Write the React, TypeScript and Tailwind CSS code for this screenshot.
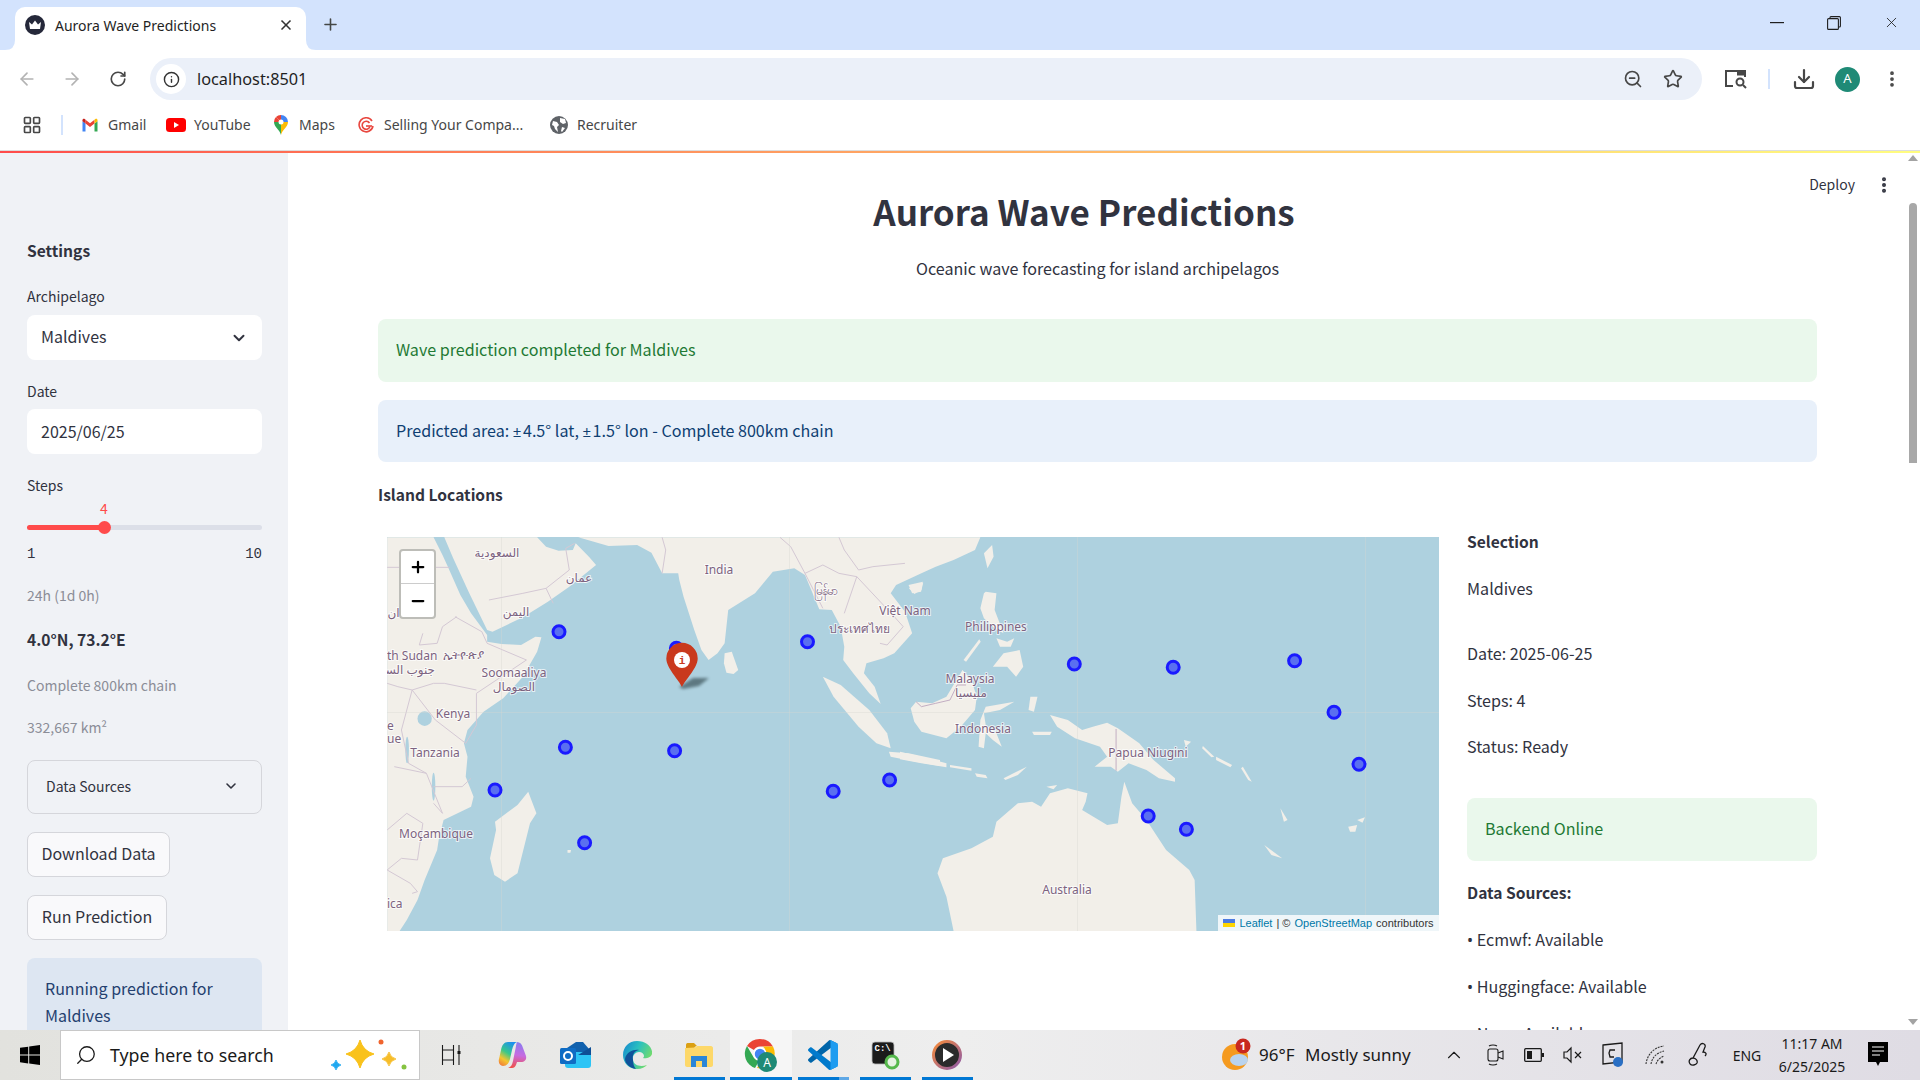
import type { ReactNode } from "react";
import {
  ArrowLeft,
  ArrowRight,
  ChevronDown,
  ChevronUp,
  Download,
  EllipsisVertical,
  Info,
  LayoutGrid,
  Minus,
  Plus,
  RotateCw,
  Search,
  Star,
  X,
  ZoomOut,
} from "lucide-react";

const Z5 = "translate(-7 -7) scale(0.35714 0.33333)";
const Z6 = "translate(513 -7) scale(0.35714 0.33333)";

const landLeft = [
  "20,22 150,22 175,75 190,110 225,195 255,250 300,315 300,335 340,342 395,345 435,320 452,322 440,365 400,440 345,505 290,545 245,600 235,640 245,680 240,740 262,800 255,830 178,870 165,925 160,960 125,1050 105,1110 75,1170 55,1203 20,1203",
  "180,22 205,85 250,190 300,300 315,305 400,262 470,215 530,170 605,105 585,80 548,40 540,60 500,62 465,50 440,22",
  "555,22 640,48 720,45 760,68 790,130 835,130 838,150 850,200 880,300 900,360 920,390 945,370 965,340 975,240 1050,190 1100,125 1160,115 1190,135 1230,238 1265,240 1290,290 1300,350 1297,390 1325,430 1370,490 1402,522 1385,470 1355,430 1362,400 1410,385 1440,370 1490,310 1470,245 1430,190 1445,165 1516,130 1556,110 1606,90 1666,60 1681,22",
  "965,370 985,365 1003,420 990,432 970,428 963,400",
  "415,785 438,850 420,880 385,1030 350,1055 320,1035 308,985 325,900 322,875 385,825",
  "1240,440 1290,465 1370,540 1420,610 1430,655 1390,640 1340,590 1270,500",
  "1425,665 1480,670 1568,690 1568,708 1500,695 1430,680",
  "525,960 535,960 533,968 525,968",
  "1480,165 1520,155 1515,185 1490,190",
];

const landRight = [
  "0,665 60,680 130,700 130,712 60,700 0,688",
  "30,535 45,515 90,520 130,500 175,420 200,450 215,500 210,540 170,590 130,625 60,605 40,575",
  "225,570 240,530 320,515 280,540 235,550 240,585 270,610 285,650 260,630 240,610 235,655 220,650",
  "235,190 240,185 270,190 265,240 290,310 265,295 235,265 225,235",
  "260,410 290,370 335,360 345,410 325,440 300,410",
  "270,325 300,335 320,325 310,350 280,350",
  "178,390 222,328 226,335 185,395",
  "235,70 258,45 262,80 245,115",
  "25,175 65,158 60,180 40,192",
  "420,555 470,570 510,600 540,590 580,578 610,595 670,640 710,690 770,745 770,755 725,745 690,720 640,700 610,725 590,710 545,710 580,680 560,650 490,625 440,590",
  "290,745 355,710 330,735 295,750",
  "210,730 240,735 245,745 215,740",
  "140,705 200,715 200,722 140,712",
  "150,1203 130,1100 105,1030 120,985 200,955 260,920 270,875 330,820 370,815 395,830 420,790 470,775 525,790 520,815 510,840 580,885 610,880 620,800 628,755 650,820 690,870 745,960 810,1020 825,1050 830,1203",
  "1020,945 1070,985 1040,975",
  "1255,890 1280,885 1275,905 1260,905",
  "1280,870 1302,862 1295,878",
  "848,648 880,680 872,682 846,655",
  "885,680 930,705 925,712 885,690",
  "960,710 985,755 975,750 955,715",
  "365,500 385,500 375,545 360,540",
  "370,605 425,605 420,615 375,615",
  "410,770 440,765 430,778",
  "795,630 815,635 800,650",
  "1065,835 1085,870 1075,875",
];

const bordersLeft = [
  "20,112 195,112",
  "305,210 400,190 465,175 485,220",
  "465,175 530,120 520,55 545,40",
  "210,260 285,305 300,340 410,390 340,440 270,490 270,585 240,640 155,570 90,480",
  "20,460 50,470 90,480 150,460 180,460 270,480",
  "120,310 110,345 160,340 175,290 215,260",
  "150,770 230,770 255,745",
  "90,480 60,600 80,700 130,730 175,850 150,820",
  "40,710 130,730",
  "20,900 75,850 120,880 105,990 60,985 20,1020 85,1060 105,1085 90,1090",
  "790,130 800,60 790,22",
  "1120,22 1150,50 1190,130 1240,235",
  "1285,22 1300,60 1340,120 1380,110 1470,100",
  "1300,250 1335,140 1440,260 1465,290 1420,345 1400,340",
  "1190,130 1240,105 1285,130 1335,140",
];

const bordersRight = ["45,515 60,530 100,520 140,510 160,465 185,465", "605,597 605,722"];

const dots = [
  [172, 94.7],
  [289.4, 111.3],
  [420.5, 104.7],
  [178.4, 210.3],
  [287.6, 213.7],
  [108, 253],
  [197.6, 305.7],
  [446.2, 254.3],
  [502.6, 243],
  [687.3, 127],
  [786.2, 130.3],
  [907.6, 123.7],
  [947, 175.3],
  [972, 227.3],
  [761.2, 279],
  [799.4, 292.3],
];

const labels: [string, number, number, "middle" | "start" | "end"][] = [
  ["السعودية", 110, 20, "middle"],
  ["عمان", 192, 45, "middle"],
  ["India", 332, 37, "middle"],
  ["မြန်မာ", 438, 58, "middle"],
  ["Việt Nam", 518, 78, "middle"],
  ["ประเทศไทย", 472, 96, "middle"],
  ["اليمن", 129, 79, "middle"],
  ["th Sudan", 0, 123, "start"],
  ["ኢትዮጵያ", 76, 122, "middle"],
  ["جنوب السو", 48, 137, "end"],
  ["Soomaaliya", 127, 140, "middle"],
  ["الصومال", 127, 154, "middle"],
  ["Kenya", 66, 181, "middle"],
  ["Tanzania", 48, 220, "middle"],
  ["e", 0, 193, "start"],
  ["ue", 0, 206, "start"],
  ["Moçambique", 49, 301, "middle"],
  ["ica", 0, 371, "start"],
  ["دان", 18, 80, "end"],
  ["Philippines", 609, 94, "middle"],
  ["Malaysia", 583, 146, "middle"],
  ["مليسيا", 584, 160, "middle"],
  ["Indonesia", 596, 196, "middle"],
  ["Papua Niugini", 761, 220, "middle"],
  ["Australia", 680, 357, "middle"],
];

function WorldMap() {
  return (
    <div className="relative h-[394px] w-[1052px] overflow-hidden bg-[#aed1df]">
      <svg viewBox="0 0 1052 394" className="block h-full w-full">
        <g transform={Z5} className="blur-[0.4px]">
          {landLeft.map((p) => (
            <polygon key={p} points={p} fill="#f2efe9" />
          ))}
          <ellipse cx="125" cy="566" rx="20" ry="22" fill="#aed1df" />
          <ellipse cx="76" cy="660" rx="5" ry="40" fill="#aed1df" />
          <ellipse cx="150" cy="770" rx="5" ry="42" fill="#aed1df" />
          {bordersLeft.map((p) => (
            <polyline key={p} points={p} fill="none" stroke="#d4c8d4" strokeWidth="1" vectorEffect="non-scaling-stroke" />
          ))}
        </g>
        <g transform={Z6} className="blur-[0.4px]">
          {landRight.map((p) => (
            <polygon key={p} points={p} fill="#f2efe9" />
          ))}
          {bordersRight.map((p) => (
            <polyline key={p} points={p} fill="none" stroke="#c3aec3" strokeWidth="1" vectorEffect="non-scaling-stroke" />
          ))}
        </g>
        <g stroke="#d8d8d0" strokeOpacity="0.35" strokeWidth="1">
          <line x1="114.500" y1="0" x2="114.500" y2="394" />
          <line x1="402.500" y1="0" x2="402.500" y2="394" />
          <line x1="690.500" y1="0" x2="690.500" y2="394" />
          <line x1="978.500" y1="0" x2="978.500" y2="394" />
          <line x1="0" y1="175.500" x2="1052" y2="175.500" />
        </g>
        <g className="font-['Noto_Sans','DejaVu_Sans',sans-serif] text-[12px] [paint-order:stroke]" fill="#7d6380" stroke="#ffffff" strokeWidth="2" strokeOpacity="0.7">
          {labels.map(([text, x, y, anchor]) => (
            <text key={text} x={x} y={y} textAnchor={anchor}>
              {text}
            </text>
          ))}
        </g>
        {dots.map(([x, y]) => (
          <circle key={x} cx={x} cy={y} r="6" fill="#5a6ff0" stroke="#1a1aff" strokeWidth="3" />
        ))}
        <polygon points="292,150 306,141 322,141 312,149 296,152" fill="#334a50" opacity="0.65" className="blur-[1.5px]" />
        <path d="M295 150c-3-7-15.700-19-15.700-28.500a15.700 15.700 0 0 1 31.400 0c0 9.500-12.700 21.500-15.700 28.500z" fill="#c9391d" />
        <circle cx="295" cy="123" r="8" fill="#ffffff" />
        <text x="295" y="127" textAnchor="middle" className="font-['Liberation_Mono',monospace] text-[11px] font-bold" fill="#c9391d">
          i
        </text>
      </svg>
      <div className="absolute left-[12px] top-[12px] w-[37px] overflow-hidden rounded-[4px] border-2 border-[#bdbdb8] bg-white font-['Liberation_Sans',sans-serif] text-black">
        <div className="flex h-[33px] items-center justify-center border-b border-[#cccccc]">
          <Plus size={18} strokeWidth={3} />
        </div>
        <div className="flex h-[33px] items-center justify-center">
          <Minus size={18} strokeWidth={3} />
        </div>
      </div>
      <div className="absolute bottom-0 right-0 flex h-[16px] w-[221px] items-center justify-center gap-[4px] bg-white/80 font-['Liberation_Sans',sans-serif] text-[11px] text-[#333333]">
        <span className="flex h-[8px] w-[12px] flex-col">
          <span className="h-1/2 bg-[#4c7be1]" />
          <span className="h-1/2 bg-[#ffd500]" />
        </span>
        <span className="text-[#0078a8]">Leaflet</span>
        <span>| ©</span>
        <span className="text-[#0078a8]">OpenStreetMap</span>
        <span>contributors</span>
      </div>
    </div>
  );
}

function Crown() {
  return (
    <svg viewBox="0 0 20 20" className="h-[20px] w-[20px]">
      <circle cx="10" cy="10" r="10" fill="#25283a" />
      <path d="M4 7l3 2.500L10 5.500l3 4 3-2.500-1 7H5z" fill="#ffffff" />
    </svg>
  );
}

function GmailIcon() {
  return (
    <svg viewBox="0 0 24 24" className="h-[18px] w-[18px]">
      <path fill="#4285F4" d="M2 20.500h4V10L2 7z" />
      <path fill="#34A853" d="M18 20.500h4V7l-4 3z" />
      <path fill="#EA4335" d="M6 10V5l6 4.500L18 5v5l-6 4.500z" />
      <path fill="#FBBC04" d="M18 5l1.500-1.200C21 3 22 4 22 5.500V7l-4 3z" />
      <path fill="#C5221F" d="M2 7V5.500C2 4 3.500 3 5 4l1 1v5z" />
    </svg>
  );
}

function YouTubeIcon() {
  return (
    <svg viewBox="0 0 20 14" className="h-[14px] w-[20px]">
      <rect width="20" height="14" rx="3.500" fill="#ff0000" />
      <path d="M8 4l5 3-5 3z" fill="#ffffff" />
    </svg>
  );
}

function MapsIcon() {
  return (
    <svg viewBox="0 0 14 20" className="h-[20px] w-[14px]">
      <path d="M7 20C6 15 0 12 0 7h7z" fill="#34a853" />
      <path d="M7 20c1-5 7-8 7-13H7z" fill="#fbbc04" />
      <path d="M2 2a7 7 0 0 1 5-2v7z" fill="#ea4335" />
      <path d="M7 0a7 7 0 0 1 7 7H7z" fill="#4285f4" />
      <path d="M2 2L7 7H0a7 7 0 0 1 2-5z" fill="#ea4335" />
      <circle cx="7" cy="7" r="2.500" fill="#ffffff" />
    </svg>
  );
}

function SellingIcon() {
  return (
    <svg viewBox="0 0 16 16" className="h-[16px] w-[16px]" fill="none" stroke="#e8473f" strokeWidth="1.600">
      <path d="M14 4A7 7 0 1 0 15 9" />
      <path d="M11.500 6A4 4 0 1 0 12 9.500" />
      <path d="M8 9h6" />
    </svg>
  );
}

function RecruiterIcon() {
  return (
    <svg viewBox="0 0 18 18" className="h-[18px] w-[18px]">
      <circle cx="9" cy="9" r="9" fill="#5f6368" />
      <path d="M3 5l4 1 2 3-2 2 1 5-3-3-1-3-2-1zM10 2l5 1 1 4-3 1-3-2zM12 11l3 1-3 4-1-1z" fill="#ffffff" />
    </svg>
  );
}

function Bookmark({ icon, label, itemClass, iconClass }: { icon: ReactNode; label: string; itemClass: string; iconClass: string }) {
  return (
    <div className={`flex items-center ${itemClass}`}>
      <div className={`flex shrink-0 items-center ${iconClass}`}>{icon}</div>
      <span className="whitespace-nowrap text-[14px] text-[#474747]">{label}</span>
    </div>
  );
}

function BrowserChrome() {
  return (
    <div className="font-['Noto_Sans',sans-serif]">
      <div className="flex h-[50px] items-end bg-[#d3e3fd] pl-[15px]">
        <div className="relative flex h-[43px] w-[291px] items-center rounded-t-[10px] bg-white pb-[7px] pl-[10px] pr-[12px]">
          <svg viewBox="0 0 10 10" className="absolute bottom-0 left-[-10px] h-[10px] w-[10px]">
            <path d="M0 10Q10 10 10 0V10z" fill="#ffffff" />
          </svg>
          <svg viewBox="0 0 10 10" className="absolute bottom-0 right-[-10px] h-[10px] w-[10px]">
            <path d="M10 10Q0 10 0 0V10z" fill="#ffffff" />
          </svg>
          <Crown />
          <span className="ml-[10px] flex-1 whitespace-nowrap text-[14px] text-[#1f1f1f]">Aurora Wave Predictions</span>
          <X size={16} strokeWidth={2.5} className="text-[#333333]" />
        </div>
        <Plus size={19} strokeWidth={2} className="mb-[16px] ml-[15px] text-[#444746]" />
        <div className="mb-[19px] ml-auto flex items-center">
          <svg viewBox="0 0 14 2" className="h-[2px] w-[14px]">
            <rect width="14" height="1.200" fill="#1f1f1f" />
          </svg>
          <svg viewBox="0 0 14 14" className="ml-[43px] h-[14px] w-[14px]" fill="none" stroke="#1f1f1f" strokeWidth="1.100">
            <rect x="0.600" y="2.600" width="10.800" height="10.800" rx="1" />
            <path d="M3 2.500V1.600C3 1 3.500 .600 4 .600h8.400c.6 0 1 .4 1 1V10c0 .5-.4 1-1 1h-1" />
          </svg>
          <X size={17} strokeWidth={1.2} className="ml-[42px] mr-[20px] text-[#1f1f1f]" />
        </div>
      </div>
      <div className="flex h-[58px] items-start rounded-t-[10px] bg-white pt-[8px]">
        <div className="flex h-[42px] w-[150px] items-center pl-[17px] text-[#5f6368]">
          <ArrowLeft size={20} strokeWidth={2} className="text-[#b3b3b3]" />
          <ArrowRight size={20} strokeWidth={2} className="ml-[25px] text-[#b3b3b3]" />
          <RotateCw size={18} strokeWidth={2.2} className="ml-[27px] text-[#474747]" />
        </div>
        <div className="flex h-[42px] w-[1552px] items-center rounded-full bg-[#ebf0f9] pl-[6px] pr-[19px]">
          <div className="flex h-[30px] w-[30px] items-center justify-center rounded-full bg-white">
            <Info size={17} strokeWidth={2} className="text-[#333333]" />
          </div>
          <span className="ml-[11px] flex-1 text-[16.300px] text-[#1f1f1f]">localhost:8501</span>
          <ZoomOut size={20} strokeWidth={2} className="text-[#474747]" />
          <Star size={20} strokeWidth={2} className="ml-[20px] text-[#474747]" />
        </div>
        <div className="flex h-[42px] items-center">
          <svg viewBox="0 0 24 20" className="ml-[22px] h-[20px] w-[24px]" fill="none" stroke="#474747" strokeWidth="2">
            <path d="M9 17H2V2h19v6" />
            <path d="M13 1.500h8v5h-8z" fill="#474747" stroke="none" />
            <circle cx="16" cy="13" r="3.500" />
            <path d="M19 16l3 3" />
          </svg>
          <div className="ml-[20px] h-[20px] w-[2px] bg-[#d3e3fd]" />
          <Download size={24} strokeWidth={2.2} className="ml-[22px] text-[#474747]" />
          <div className="ml-[19px] flex h-[25px] w-[25px] items-center justify-center rounded-full bg-[#1f8a76] text-[13px] text-white">A</div>
          <EllipsisVertical size={20} strokeWidth={2.5} className="ml-[22px] text-[#474747]" />
        </div>
      </div>
      <div className="flex h-[42px] items-center pb-[9px] pl-[22px]">
        <LayoutGrid size={20} strokeWidth={2} className="text-[#474747]" />
        <div className="ml-[19px] mr-[18px] h-[20px] w-[2px] bg-[#d3e3fd]" />
        <Bookmark icon={<GmailIcon />} label="Gmail" itemClass="w-[85px]" iconClass="w-[27px]" />
        <Bookmark icon={<YouTubeIcon />} label="YouTube" itemClass="w-[108px]" iconClass="w-[28px]" />
        <Bookmark icon={<MapsIcon />} label="Maps" itemClass="w-[84px]" iconClass="w-[25px]" />
        <Bookmark icon={<SellingIcon />} label="Selling Your Compa..." itemClass="w-[192px]" iconClass="w-[26px]" />
        <Bookmark icon={<RecruiterIcon />} label="Recruiter" itemClass="w-[100px]" iconClass="w-[27px]" />
      </div>
      <div className="h-[1px] bg-[#dddddd]" />
      <div className="h-[2px] bg-gradient-to-r from-[#ff4b4b] to-[#fffd80]" />
    </div>
  );
}

function Sidebar() {
  return (
    <aside className="h-full w-[288px] shrink-0 overflow-hidden bg-[#f0f2f6] pl-[27px] pr-[26px] pt-[86px] text-[#31333f]">
      <div className="h-[26px] text-[15.600px] font-semibold leading-[22px]">Settings</div>
      <div className="mt-[22px] h-[20px] text-[14px] leading-[18px]">Archipelago</div>
      <div className="mt-[8px] flex h-[45px] items-center justify-between rounded-[8px] bg-white pb-[3px] pl-[14px] pr-[14px] text-[16px]">
        <span>Maldives</span>
        <ChevronDown size={18} strokeWidth={2.6} className="mt-[3px]" />
      </div>
      <div className="mt-[22px] h-[20px] text-[14px] leading-[18px]">Date</div>
      <div className="mt-[7px] flex h-[45px] items-center rounded-[8px] bg-white pb-[2px] pl-[14px] text-[16px]">2025/06/25</div>
      <div className="mt-[22px] h-[20px] text-[14px] leading-[18px]">Steps</div>
      <div className="ml-[70px] mt-[2px] h-[20px] w-[14px] text-center text-[14px] leading-[20px] text-[#ff4b4b]">4</div>
      <div className="relative mt-[7px] h-[5px] rounded-full bg-[#dcdfe8]">
        <div className="h-full w-[78px] rounded-full bg-[#ff4b4b]" />
        <div className="absolute left-[71px] top-[-4px] h-[13px] w-[13px] rounded-full bg-[#ff4b4b]" />
      </div>
      <div className="mt-[14px] flex h-[20px] justify-between font-['Liberation_Mono',monospace] text-[14px] leading-[20px]">
        <span>1</span>
        <span>10</span>
      </div>
      <div className="mt-[22px] h-[20px] text-[14px] leading-[18px] text-[#8b8d97]">24h (1d 0h)</div>
      <div className="mt-[22px] h-[24px] text-[15.600px] font-semibold leading-[22px]">4.0°N, 73.2°E</div>
      <div className="mt-[24px] h-[20px] text-[14px] leading-[18px] text-[#8b8d97]">Complete 800km chain</div>
      <div className="mt-[22px] h-[20px] text-[14px] leading-[19px] text-[#8b8d97]">332,667 km²</div>
      <div className="mt-[22px] flex h-[54px] items-center justify-between rounded-[8px] border border-[#d5d6db] pb-[2px] pl-[18px] pr-[22px] text-[14px]">
        <span>Data Sources</span>
        <ChevronDown size={16} strokeWidth={2.4} />
      </div>
      <div className="mt-[18px] flex h-[45px] w-[143px] items-center justify-center rounded-[8px] border border-[#d5d6db] bg-[#f9f9fb] pb-[3px] text-[16px]">Download Data</div>
      <div className="mt-[18px] flex h-[45px] w-[140px] items-center justify-center rounded-[8px] border border-[#d5d6db] bg-[#f9f9fb] pb-[3px] text-[16px]">Run Prediction</div>
      <div className="mt-[18px] h-[100px] rounded-[8px] bg-[#dde6f2] px-[18px] pt-[17px] text-[16px] leading-[27px] text-[#24406f]">Running prediction for Maldives</div>
    </aside>
  );
}

function Line({ children, className = "" }: { children: ReactNode; className?: string }) {
  return <div className={`h-[24px] leading-[22px] ${className}`}>{children}</div>;
}

function Bullet({ children }: { children: ReactNode }) {
  return (
    <Line className="mt-[23px] text-[16.100px]">
      <span className="font-['Noto_Sans',sans-serif]">•</span> {children}
    </Line>
  );
}

function MainContent() {
  return (
    <main className="relative flex h-full min-w-0 flex-1 overflow-hidden bg-white text-[#31333f]">
      <div className="absolute right-[65px] top-[21px] text-[14px] leading-[20px]">Deploy</div>
      <EllipsisVertical size={20} strokeWidth={2.8} className="absolute right-[26px] top-[22px]" />
      <div className="h-full w-[1617px] shrink-0 pl-[90px] pr-[88px] pt-[33px]">
        <h1 className="h-[52px] pr-[27px] text-center text-[35px] font-semibold leading-[50px]">Aurora Wave Predictions</h1>
        <Line className="mt-[19px] text-center text-[16.100px]">Oceanic wave forecasting for island archipelagos</Line>
        <div className="mt-[38px] flex h-[63px] items-center rounded-[8px] bg-[#eaf8ec] px-[18px] pb-[3px] text-[16.100px] text-[#1f7a35]">Wave prediction completed for Maldives</div>
        <div className="mt-[18px] flex h-[62px] items-center rounded-[8px] bg-[#e8f0fa] px-[18px] pb-[2px] text-[16.100px] text-[#0f3f72]">
          <span>
            Predicted area: <span className="mr-[1.500px] font-['Noto_Sans',sans-serif] text-[15px]">±</span>4.5° lat, <span className="mr-[1.500px] font-['Noto_Sans',sans-serif] text-[15px]">±</span>1.5° lon - Complete 800km chain
          </span>
        </div>
        <Line className="mt-[21px] text-[15.600px] font-semibold">Island Locations</Line>
        <div className="mt-[23px] flex">
          <div className="ml-[9px] pt-[7px]">
            <WorldMap />
          </div>
          <div className="ml-[28px] w-[350px]">
            <Line className="text-[15.600px] font-semibold">Selection</Line>
            <Line className="mt-[23px] text-[16.100px]">Maldives</Line>
            <Line className="mt-[41px] text-[16.100px]">Date: 2025-06-25</Line>
            <Line className="mt-[23px] text-[16.100px]">Steps: 4</Line>
            <Line className="mt-[22px] text-[16.100px]">Status: Ready</Line>
            <div className="mt-[39px] flex h-[63px] items-center rounded-[8px] bg-[#eaf8ec] px-[18px] pb-[3px] text-[16.100px] text-[#1f7a35]">Backend Online</div>
            <Line className="mt-[20px] text-[15.600px] font-semibold">Data Sources:</Line>
            <Bullet>Ecmwf: Available</Bullet>
            <Bullet>Huggingface: Available</Bullet>
            <Bullet>Noaa: Available</Bullet>
          </div>
        </div>
      </div>
      <div className="flex h-full w-[15px] shrink-0 flex-col items-center">
        <div className="mt-[2px] h-0 w-0 border-x-[5px] border-b-[6px] border-x-transparent border-b-[#a3a3a3]" />
        <div className="mt-[42px] h-[260px] w-[8px] rounded-t-full bg-[#a8a8a8]" />
        <div className="mt-auto mb-[5px] h-0 w-0 border-x-[5px] border-t-[6px] border-x-transparent border-t-[#a3a3a3]" />
      </div>
    </main>
  );
}

function TaskButton({ children, bar, active, split }: { children: ReactNode; bar?: boolean; active?: boolean; split?: boolean }) {
  return (
    <div className={`relative flex h-full w-[62px] items-center justify-center ${active ? "bg-[#f6f6f6]" : ""}`}>
      {children}
      {bar && (
        <div className={`absolute bottom-0 flex h-[3px] justify-end bg-[#0078d4] ${active ? "w-full" : "w-[51px]"}`}>
          {split && <div className="h-full w-[10px] bg-[#5fa8e6]" />}
        </div>
      )}
    </div>
  );
}

function Sparkles() {
  return (
    <svg viewBox="0 0 80 40" className="h-[40px] w-[80px]">
      <path d="M30 5Q33 16 44 19 33 22 30 33 27 22 16 19 27 16 30 5z" fill="#f9c21b" stroke="#f9c21b" strokeWidth="1" strokeLinejoin="round" />
      <path d="M59 17Q60.500 22.500 66 24 60.500 25.500 59 31 57.500 25.500 52 24 57.500 22.500 59 17z" fill="#f6bd2a" stroke="#f6bd2a" strokeWidth="0.800" strokeLinejoin="round" />
      <path d="M6 25Q7 29 11 30 7 31 6 35 5 31 1 30 5 29 6 25z" fill="#1fa8f0" stroke="#1fa8f0" strokeWidth="0.800" strokeLinejoin="round" />
      <circle cx="51" cy="7" r="2.500" fill="#f0642e" />
      <circle cx="74" cy="32" r="2.500" fill="#85c341" />
    </svg>
  );
}

function Taskbar() {
  return (
    <footer className="flex h-[50px] items-center bg-gradient-to-r from-[#e2e2de] via-[#eeeeee] to-[#dfdce4] font-['Noto_Sans',sans-serif] text-[#1a1a1a]">
      <div className="flex w-[60px] justify-center">
        <svg viewBox="0 0 20 20" className="h-[20px] w-[20px]" fill="#000000">
          <path d="M0 2.800l8.200-1.100v7.900H0zM9.200 1.500L20 0v9.600H9.200zM0 10.500h8.200v7.900L0 17.200zM9.200 10.500H20V20L9.200 18.500z" />
        </svg>
      </div>
      <div className="flex h-full w-[360px] items-center border border-[#c8c8c8] bg-white pl-[14px] pr-[9px]">
        <Search size={22} strokeWidth={1.4} className="-scale-x-100" />
        <span className="ml-[13px] whitespace-nowrap text-[17.800px]">Type here to search</span>
        <div className="ml-auto">
          <Sparkles />
        </div>
      </div>
      <TaskButton>
        <svg viewBox="0 0 20 20" className="h-[20px] w-[20px]" fill="none" stroke="#1a1a1a" strokeWidth="1.100">
          <path d="M1.500 0v20M12.500 0v20M1.500 5h11M1.500 15h11M18 0v20" />
          <rect x="16.500" y="6" width="3" height="3" fill="#1a1a1a" stroke="none" />
        </svg>
      </TaskButton>
      <TaskButton>
        <svg viewBox="0 0 30 30" className="h-[30px] w-[30px]">
          <defs>
            <linearGradient id="copL" x1="0.700" y1="0" x2="0.200" y2="1">
              <stop offset="0" stopColor="#1c8ff0" />
              <stop offset="0.450" stopColor="#38c88a" />
              <stop offset="0.750" stopColor="#f5c52e" />
              <stop offset="1" stopColor="#f0803a" />
            </linearGradient>
            <linearGradient id="copR" x1="0.500" y1="0" x2="0.400" y2="1">
              <stop offset="0" stopColor="#8a7cf0" />
              <stop offset="0.500" stopColor="#c76be0" />
              <stop offset="1" stopColor="#f0504a" />
            </linearGradient>
          </defs>
          <path d="M10 2h9c-3 1-4 4-5 8l-2 9c-1 4-3 7-7 7-3 0-5-3-4-7l2-9c1-5 3-8 7-8z" fill="url(#copL)" />
          <path d="M19 2c3 0 5 2 6 6l3 8c1 4-2 6-5 6h-4l-1 3c-1 2-2 3-4 3h-4c3-1 4-3 5-7l2-10c1-4 1-7 2-9z" fill="url(#copR)" />
        </svg>
      </TaskButton>
      <TaskButton>
        <svg viewBox="0 0 32 28" className="h-[28px] w-[32px]">
          <path d="M8 7l9-6h7l6 7-12 8z" fill="#1161ad" />
          <path d="M6 11h26v13c0 2-1 3-3 3H9c-2 0-3-1-3-3z" fill="#2cc4f5" />
          <path d="M19 14L32 6v8z" fill="#0e4f96" />
          <rect x="1" y="7" width="16" height="16" rx="1.500" fill="#0f6cc4" />
          <circle cx="9" cy="15" r="4" fill="none" stroke="#ffffff" strokeWidth="2" />
        </svg>
      </TaskButton>
      <TaskButton>
        <svg viewBox="0 0 30 30" className="h-[30px] w-[30px]">
          <defs>
            <linearGradient id="edgeA" x1="0" y1="0" x2="1" y2="0.500">
              <stop offset="0" stopColor="#1584d0" />
              <stop offset="0.500" stopColor="#2ac0c0" />
              <stop offset="1" stopColor="#74dc6a" />
            </linearGradient>
          </defs>
          <path d="M15 1C7 1 1 7 1 15c0 8 6 14 14 14 5 0 8-2 10-4-6 2-13 1-14-5-1-4 2-8 6-8 3 0 5 2 5 4 0 1-1 2-1 2 2 1 8 0 9-4C31 7 24 1 15 1z" fill="url(#edgeA)" />
          <path d="M11 20c-1-5 1-9 6-10-5-1-13 2-14 9 0 5 5 9 11 10-2-2-3-5-3-9z" fill="#10529a" />
        </svg>
      </TaskButton>
      <TaskButton bar>
        <svg viewBox="0 0 28 24" className="h-[24px] w-[28px]">
          <path d="M1 2c0-1 .5-2 1.500-2H9l3 3h-1L9 5H1z" fill="#dba013" />
          <path d="M1 5l9-.5L12 3h14c1 0 2 1 2 2v17c0 1-1 2-2 2H2c-1 0-2-1-2-2V5z" fill="#fdd869" />
          <rect x="6" y="13" width="16" height="11" fill="#2a86d8" />
          <rect x="11" y="18" width="6" height="6" fill="#fdd869" />
        </svg>
      </TaskButton>
      <TaskButton bar active>
        <svg viewBox="0 0 36 36" className="h-[36px] w-[36px]">
          <path d="M17 2a15 15 0 0 1 13 7.500H17a7 7 0 0 0-6.100 3.500L4 9A15 15 0 0 1 17 2z" fill="#ea4335" />
          <path d="M4 9l7 12a7 7 0 0 0 5 3l-4 7A15 15 0 0 1 4 9z" fill="#34a853" />
          <path d="M30 9.500A15 15 0 0 1 14 31l7-12a7 7 0 0 0-1-9.500z" fill="#fbbc04" />
          <circle cx="17" cy="17" r="6" fill="#4285f4" stroke="#ffffff" strokeWidth="1.500" />
          <circle cx="24" cy="25" r="10" fill="#1f8a76" />
          <text x="24" y="29.500" textAnchor="middle" className="text-[12px]" fill="#ffffff">A</text>
        </svg>
      </TaskButton>
      <TaskButton bar split>
        <svg viewBox="0 0 100 100" className="h-[30px] w-[30px]">
          <path d="M96.500 10.800 75.900.9c-2.400-1.200-5.200-.7-7.100 1.200L1.400 63.500c-1.800 1.600-1.800 4.500 0 6.200l5.500 5c1.500 1.300 3.700 1.400 5.300.2L93.400 13c2.700-2.100 6.600-.1 6.600 3.300v-.2c0-2.400-1.400-4.600-3.500-5.300z" fill="#0065a9" />
          <path d="M96.500 89.300 75.900 99.200c-2.400 1.100-5.200.7-7.100-1.200L1.400 36.500c-1.800-1.600-1.800-4.500 0-6.200l5.500-5c1.500-1.300 3.700-1.400 5.300-.2L93.400 87c2.700 2.100 6.600.1 6.600-3.300v.2c0 2.400-1.400 4.600-3.500 5.100z" fill="#007acc" />
          <path d="M75.900 99.200c-2.400 1.200-5.200.7-7.100-1.200 2.300 2.300 6.200.7 6.200-2.600V4.600c0-3.300-3.900-4.900-6.200-2.600 1.900-1.900 4.700-2.400 7.100-1.200l20.600 9.900c2.100 1 3.500 3.200 3.500 5.600v67.400c0 2.400-1.400 4.600-3.500 5.600z" fill="#1f9cf0" />
        </svg>
      </TaskButton>
      <TaskButton bar>
        <svg viewBox="0 0 30 30" className="h-[30px] w-[30px]">
          <rect x="2" y="2" width="22" height="22" rx="3" fill="#1b1b1b" stroke="#b8b8b8" strokeWidth="0.800" />
          <text x="4.500" y="11" className="font-['Liberation_Mono',monospace] text-[9px] font-bold" fill="#ffffff">C:\</text>
          <circle cx="22" cy="22" r="6" fill="#e8f2e4" stroke="#56b84c" strokeWidth="3" />
        </svg>
      </TaskButton>
      <TaskButton bar>
        <svg viewBox="0 0 30 30" className="h-[30px] w-[30px]">
          <defs>
            <linearGradient id="playRing" x1="0" y1="0" x2="1" y2="1">
              <stop offset="0" stopColor="#f58a38" />
              <stop offset="1" stopColor="#8e5aa8" />
            </linearGradient>
          </defs>
          <circle cx="15" cy="15" r="13.500" fill="#2b2b2b" stroke="url(#playRing)" strokeWidth="3" />
          <path d="M11 8l11 7-11 7z" fill="#ffffff" />
        </svg>
      </TaskButton>
      <div className="ml-[244px] flex w-[37px] justify-start">
        <svg viewBox="0 0 30 34" className="h-[34px] w-[30px]">
          <circle cx="13" cy="19" r="13" fill="#f59a1f" />
          <ellipse cx="17" cy="22" rx="9" ry="6" fill="#b9d3ee" />
          <circle cx="21" cy="8" r="7.500" fill="#c8281f" />
          <text x="21" y="12" textAnchor="middle" className="text-[11px] font-bold" fill="#ffffff">1</text>
        </svg>
      </div>
      <span className="w-[46px] text-[17px]">96°F</span>
      <span className="w-[134px] whitespace-nowrap text-[17px]">Mostly sunny</span>
      <div className="flex w-[30px] justify-center">
        <ChevronUp size={22} strokeWidth={1.2} />
      </div>
      <div className="flex w-[52px] justify-center">
        <svg viewBox="0 0 18 22" className="h-[22px] w-[18px]" fill="none" stroke="#1a1a1a" strokeWidth="1.100">
          <path d="M3 2c2-1.300 6-1.300 8 0M3 20c2 1.300 6 1.300 8 0" />
          <rect x="2" y="5" width="10" height="12" rx="2" />
          <path d="M12 9l5-2v8l-5-2" />
        </svg>
      </div>
      <div className="flex w-[26px] justify-center">
        <svg viewBox="0 0 20 14" className="h-[14px] w-[20px]">
          <rect x="0.700" y="0.700" width="16.600" height="12.600" rx="1" fill="none" stroke="#1a1a1a" strokeWidth="1.300" />
          <rect x="3" y="3" width="5" height="8" fill="#1a1a1a" />
          <rect x="18" y="5" width="2" height="4" fill="#1a1a1a" />
        </svg>
      </div>
      <div className="flex w-[52px] justify-center">
        <svg viewBox="0 0 20 18" className="h-[18px] w-[20px]" fill="none" stroke="#1a1a1a" strokeWidth="1.200">
          <path d="M1 6h3l4-4v14l-4-4H1z" />
          <path d="M12 6l6 6M18 6l-6 6" />
        </svg>
      </div>
      <div className="flex w-[28px] justify-center">
        <svg viewBox="0 0 22 26" className="h-[26px] w-[22px]">
          <path d="M1 3l19-2v19L1 22z" fill="none" stroke="#1a1a1a" strokeWidth="1.300" />
          <path d="M13 8H8l-1 3 1 4h4" fill="none" stroke="#1a1a1a" strokeWidth="1.300" />
          <circle cx="16" cy="20" r="5" fill="#2a6fc4" />
        </svg>
      </div>
      <div className="flex w-[56px] justify-center">
        <svg viewBox="0 0 20 20" className="h-[20px] w-[20px]" fill="none" stroke="#333333" strokeWidth="1.100" strokeDasharray="2 1">
          <path d="M1 19C2 10 9 2 19 1M6 19c1-6 5-11 13-13M11 19c1-3 3-6 8-8" />
          <circle cx="17" cy="17" r="1.500" fill="#333333" stroke="none" />
        </svg>
      </div>
      <div className="flex w-[32px] justify-center">
        <svg viewBox="0 0 22 26" className="h-[26px] w-[22px]" fill="none" stroke="#1a1a1a" strokeWidth="1.300">
          <path d="M2 22c-2-3 0-6 3-6l7-13c2-3 6-1 5 2l-2 5c3 0 4 2 2 4M5 16c2 0 5 2 4 5-1 2-5 3-7 1" />
        </svg>
      </div>
      <span className="w-[64px] text-center text-[14px]">ENG</span>
      <div className="flex w-[66px] flex-col items-center whitespace-nowrap text-[14px] leading-[23px]">
        <span>11:17 AM</span>
        <span>6/25/2025</span>
      </div>
      <div className="flex w-[66px] justify-center">
        <svg viewBox="0 0 20 26" className="h-[26px] w-[20px]">
          <path d="M0 0h20v20H12l-2 4-2-4H0z" fill="#000000" />
          <path d="M4 5h12M4 9h12M4 13h8" stroke="#ffffff" strokeWidth="1.200" />
        </svg>
      </div>
    </footer>
  );
}

export default function App() {
  return (
    <div className="flex h-[1080px] w-[1920px] flex-col overflow-hidden bg-white font-['Noto_Sans_CJK_SC','Noto_Sans',sans-serif]">
      <BrowserChrome />
      <div className="flex h-[877px] min-h-0">
        <Sidebar />
        <MainContent />
      </div>
      <Taskbar />
    </div>
  );
}
